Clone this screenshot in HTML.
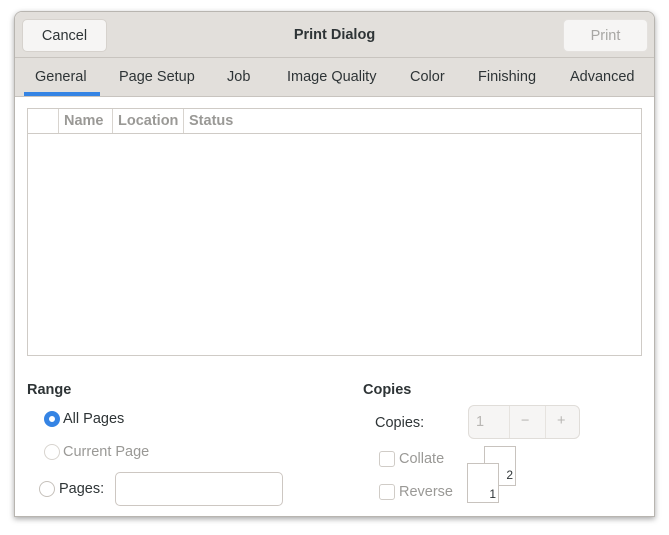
<!DOCTYPE html>
<html><head><meta charset="utf-8"><style>
*{box-sizing:border-box;margin:0;padding:0}
body{width:669px;height:535px;background:#fff;font-family:"Liberation Sans",sans-serif;font-size:14.5px;color:#2e3436;position:relative;overflow:hidden}
.win{position:absolute;left:14px;top:11px;width:641px;height:506px;background:#fff;border:1px solid #b8b5b0;border-radius:8px 8px 0 0;box-shadow:0 2px 6px rgba(0,0,0,.35);overflow:hidden}
.hdr{position:absolute;left:0;top:0;width:100%;height:46px;background:#e2dfdb;border-bottom:1px solid #c8c4bf}
.btn{position:absolute;top:7px;height:33px;border-radius:5px;background:#f6f5f4;border:1px solid #d6d2cd;text-align:center;line-height:32px}
.title{position:absolute;left:0;width:100%;top:15px;text-align:center;font-weight:bold}
.tabs{position:absolute;left:0;top:46px;width:100%;height:39px;background:#e2dfdb;border-bottom:1px solid #c8c4bf}
.tab{position:absolute;top:11px;color:#2e3436}
.abs{position:absolute}
.radio{position:absolute;width:16px;height:16px;border-radius:50%;border:1px solid #c6c1bb;background:#fff}
.chk{position:absolute;width:16px;height:16px;border-radius:3px;border:1px solid #d0ccc7;background:#fff}
.dim{color:#9a9996}
</style></head><body>
<div class="win">
 <div class="hdr">
  <div class="btn" style="left:7px;width:85px">Cancel</div>
  <div class="title">Print Dialog</div>
  <div class="btn" style="left:548px;width:85px;color:#a8a7a4;border-color:#e4e1de">Print</div>
 </div>
 <div class="tabs">
  <div class="tab" style="left:20px">General</div>
  <div style="position:absolute;left:9px;top:34px;width:76px;height:4px;background:#3584e4"></div>
  <div class="tab" style="left:104px">Page Setup</div>
  <div class="tab" style="left:212px">Job</div>
  <div class="tab" style="left:272px">Image Quality</div>
  <div class="tab" style="left:395px">Color</div>
  <div class="tab" style="left:463px">Finishing</div>
  <div class="tab" style="left:555px">Advanced</div>
 </div>
 <div class="abs" style="left:12px;top:96px;width:615px;height:248px;border:1px solid #cfcbc6;background:#fff">
  <div class="abs" style="left:0;top:0;width:100%;height:25px;border-bottom:1px solid #cfcbc6;font-weight:bold;color:#9a9996">
   <div class="abs" style="left:30px;top:0;height:24px;border-left:1px solid #d8d4cf"></div>
   <div class="abs" style="left:36px;top:4px">Name</div>
   <div class="abs" style="left:84px;top:0;height:24px;border-left:1px solid #d8d4cf"></div>
   <div class="abs" style="left:90px;top:4px">Location</div>
   <div class="abs" style="left:155px;top:0;height:24px;border-left:1px solid #d8d4cf"></div>
   <div class="abs" style="left:161px;top:4px">Status</div>
  </div>
 </div>
 <div class="abs" style="left:12px;top:370px;font-weight:bold">Range</div>
 <div class="radio" style="left:29px;top:399px;border:5px solid #3584e4"></div>
 <div class="abs" style="left:48px;top:399px">All Pages</div>
 <div class="radio" style="left:29px;top:432px;border-color:#d8d4cf"></div>
 <div class="abs dim" style="left:48px;top:432px">Current Page</div>
 <div class="radio" style="left:24px;top:469px"></div>
 <div class="abs" style="left:44px;top:469px">Pages:</div>
 <div class="abs" style="left:100px;top:460px;width:168px;height:34px;border:1px solid #cdc7c2;border-radius:5px"></div>

 <div class="abs" style="left:348px;top:370px;font-weight:bold">Copies</div>
 <div class="abs" style="left:360px;top:403px">Copies:</div>
 <div class="abs" style="left:453px;top:393px;width:112px;height:34px;border:1px solid #e0ddd9;border-radius:6px;background:#f6f5f4;color:#b8b6b3">
  <div class="abs" style="left:7px;top:8px">1</div>
  <div class="abs" style="left:40px;top:0;height:32px;border-left:1px solid #e6e3df"></div>
  <div class="abs" style="left:52px;top:7px">−</div>
  <div class="abs" style="left:76px;top:0;height:32px;border-left:1px solid #e6e3df"></div>
  <div class="abs" style="left:88px;top:7px">+</div>
 </div>
 <div class="chk" style="left:364px;top:439px"></div>
 <div class="abs dim" style="left:384px;top:439px">Collate</div>
 <div class="chk" style="left:364px;top:472px"></div>
 <div class="abs dim" style="left:384px;top:472px">Reverse</div>
 <div class="abs" style="left:469px;top:434px;width:32px;height:40px;border:1px solid #c8c3be;background:#fff;font-size:12px;text-align:right;padding-right:2px;padding-top:21px">2</div>
 <div class="abs" style="left:452px;top:451px;width:32px;height:40px;border:1px solid #c8c3be;background:#fff;font-size:12px;text-align:right;padding-right:2px;padding-top:23px">1</div>
</div>
</body></html>
